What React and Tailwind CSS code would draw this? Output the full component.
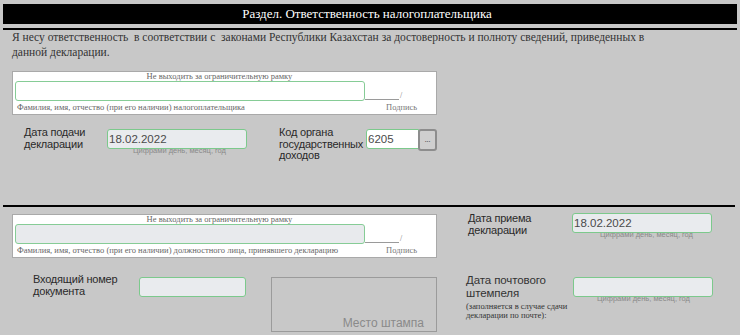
import React from "react";

const serif = "font-['Liberation_Serif',serif]";
const sans = "font-['Liberation_Sans',Arial,sans-serif]";
const label = `${sans} text-[11px] tracking-[-0.2px] leading-[11.5px] text-[#2a2a2a]`;

function Hint({ className = "" }) {
  return (
    <div className={`${sans} text-[7.5px] leading-[9px] text-[#8a8a8a] ${className}`}>
      Цифрами день, месяц, год
    </div>
  );
}

function DateField({ value, hintPad = "pl-[26px]", filled = true }) {
  return (
    <div className="w-[140px]">
      <div
        className={`relative z-10 h-[20px] rounded-[3px] border border-[#7cc98c] ${
          filled ? "bg-[#e9ebee]" : "bg-white"
        } ${sans} text-[11.5px] leading-[18px] text-[#4a4a4a] pl-px`}
      >
        {value}
      </div>
      <Hint className={`-mt-[3px] ${hintPad}`} />
    </div>
  );
}

function SignBox({ filled, caption }) {
  return (
    <div className="w-[425px] h-[44px] bg-white border border-[#a9a9a9] flex flex-col">
      <div className={`${serif} text-[8.5px] leading-[9px] text-[#666] text-center pr-[10px]`}>
        Не выходить за ограничительную рамку
      </div>
      <div className="flex items-end">
        <div className="ml-[2px] w-[350px]">
          <div
            className={`h-[20px] rounded-[3px] border border-[#86cc96] ${
              filled ? "bg-[#e8eaed]" : "bg-white"
            }`}
          />
          <div className={`${serif} text-[8.5px] leading-[10px] text-[#666] pl-[2px] mt-px whitespace-nowrap`}>
            {caption}
          </div>
        </div>
        <div className="flex-1 flex flex-col">
          <div className="flex items-end -mt-[2px]">
            <div className="w-[34px] border-b border-[#9a9a9a]" />
            <span className={`${serif} text-[8px] leading-[8px] text-[#777] ml-[1px]`}>/</span>
          </div>
          <div className={`${serif} text-[8.5px] leading-[10px] text-[#777] pl-[21px] mt-[2px]`}>
            Подпись
          </div>
        </div>
      </div>
    </div>
  );
}

export default function App() {
  return (
    <div className="w-[740px] h-[335px] bg-[#c8c8c8] overflow-hidden pt-[4px] px-[3px]">
      {/* Заголовок раздела */}
      <div className={`h-[20px] bg-black text-white text-center ${serif} text-[13px] leading-[20px] pr-[6px]`}>
        Раздел. Ответственность налогоплательщика
      </div>
      <div className="mt-[4px] h-[2px] bg-black" />

      <p className={`ml-[9px] w-[645px] whitespace-pre-wrap ${serif} text-[11.5px] leading-[15px] text-[#333]`}>
        {"Я несу ответственность  в соответствии с  законами Республики Казахстан за достоверность и полноту сведений, приведенных в данной декларации."}
      </p>

      {/* Налогоплательщик */}
      <div className="ml-[9px] mt-[11px]">
        <SignBox caption="Фамилия, имя, отчество (при его наличии) налогоплательщика" />
      </div>

      <div className="h-[78px] mt-[12px] flex items-start">
        <div className={`ml-[21px] w-[83px] ${label}`}>
          Дата подачи
          <br />
          декларации
        </div>
        <div className="mt-[2px]">
          <DateField value="18.02.2022" />
        </div>
        <div className={`ml-[32px] w-[87px] ${label}`}>
          Код органа
          <br />
          государственных
          <br />
          доходов
        </div>
        <div className="mt-[2px] flex items-start">
          <div className={`w-[53px] h-[20px] bg-white rounded-l-[3px] border border-[#7cc98c] ${sans} text-[11.5px] leading-[18px] text-[#4a4a4a] pl-px`}>
            6205
          </div>
          <button className="w-[19px] h-[22px] rounded-[3px] border-2 border-[#8d8d8d] bg-[#cfcfcf] text-[7px] leading-[14px] text-[#555] -ml-px">
            ...
          </button>
        </div>
      </div>

      <div className="h-[2px] bg-black w-[732px]" />

      {/* Орган государственных доходов */}
      <div className="mt-[7px] flex items-start">
        <div className="ml-[9px]">
          <SignBox
            filled
            caption="Фамилия, имя, отчество (при его наличии) должностного лица, принявшего декларацию"
          />
        </div>
        <div className={`ml-[31px] -mt-[2px] w-[104px] ${label} pt-[1px]`}>
          Дата приема
          <br />
          декларации
        </div>
        <div className="-mt-[1px]">
          <DateField value="18.02.2022" hintPad="pl-[28px]" />
        </div>
      </div>

      <div className="mt-[16px] flex items-start">
        <div className={`ml-[30px] w-[106px] ${label}`}>
          Входящий номер
          <br />
          документа
        </div>
        <div className="mt-[3px] w-[107px] h-[20px] rounded-[3px] border border-[#7cc98c] bg-[#e9ebee]" />
        <div className="ml-[25px] mt-[3px] w-[166px] h-[55px] border border-[#9b9b9b] flex items-end justify-end pr-[12px] pb-[1px]">
          <span className={`${sans} text-[12px] leading-[14px] text-[#8a8a8a]`}>Место штампа</span>
        </div>
        <div className="ml-[29px] w-[107px]">
          <div className={`${sans} text-[11.5px] tracking-[-0.1px] leading-[12.5px] text-[#333]`}>
            Дата почтового
            <br />
            штемпеля
          </div>
          <div className={`${serif} text-[8.5px] leading-[9px] text-[#333] mt-[3px]`}>
            (заполняется в случае сдачи
            <br />
            декларации по почте):
          </div>
        </div>
        <div className="mt-[3px]">
          <DateField value="" hintPad="pl-[24px]" />
        </div>
      </div>
    </div>
  );
}
